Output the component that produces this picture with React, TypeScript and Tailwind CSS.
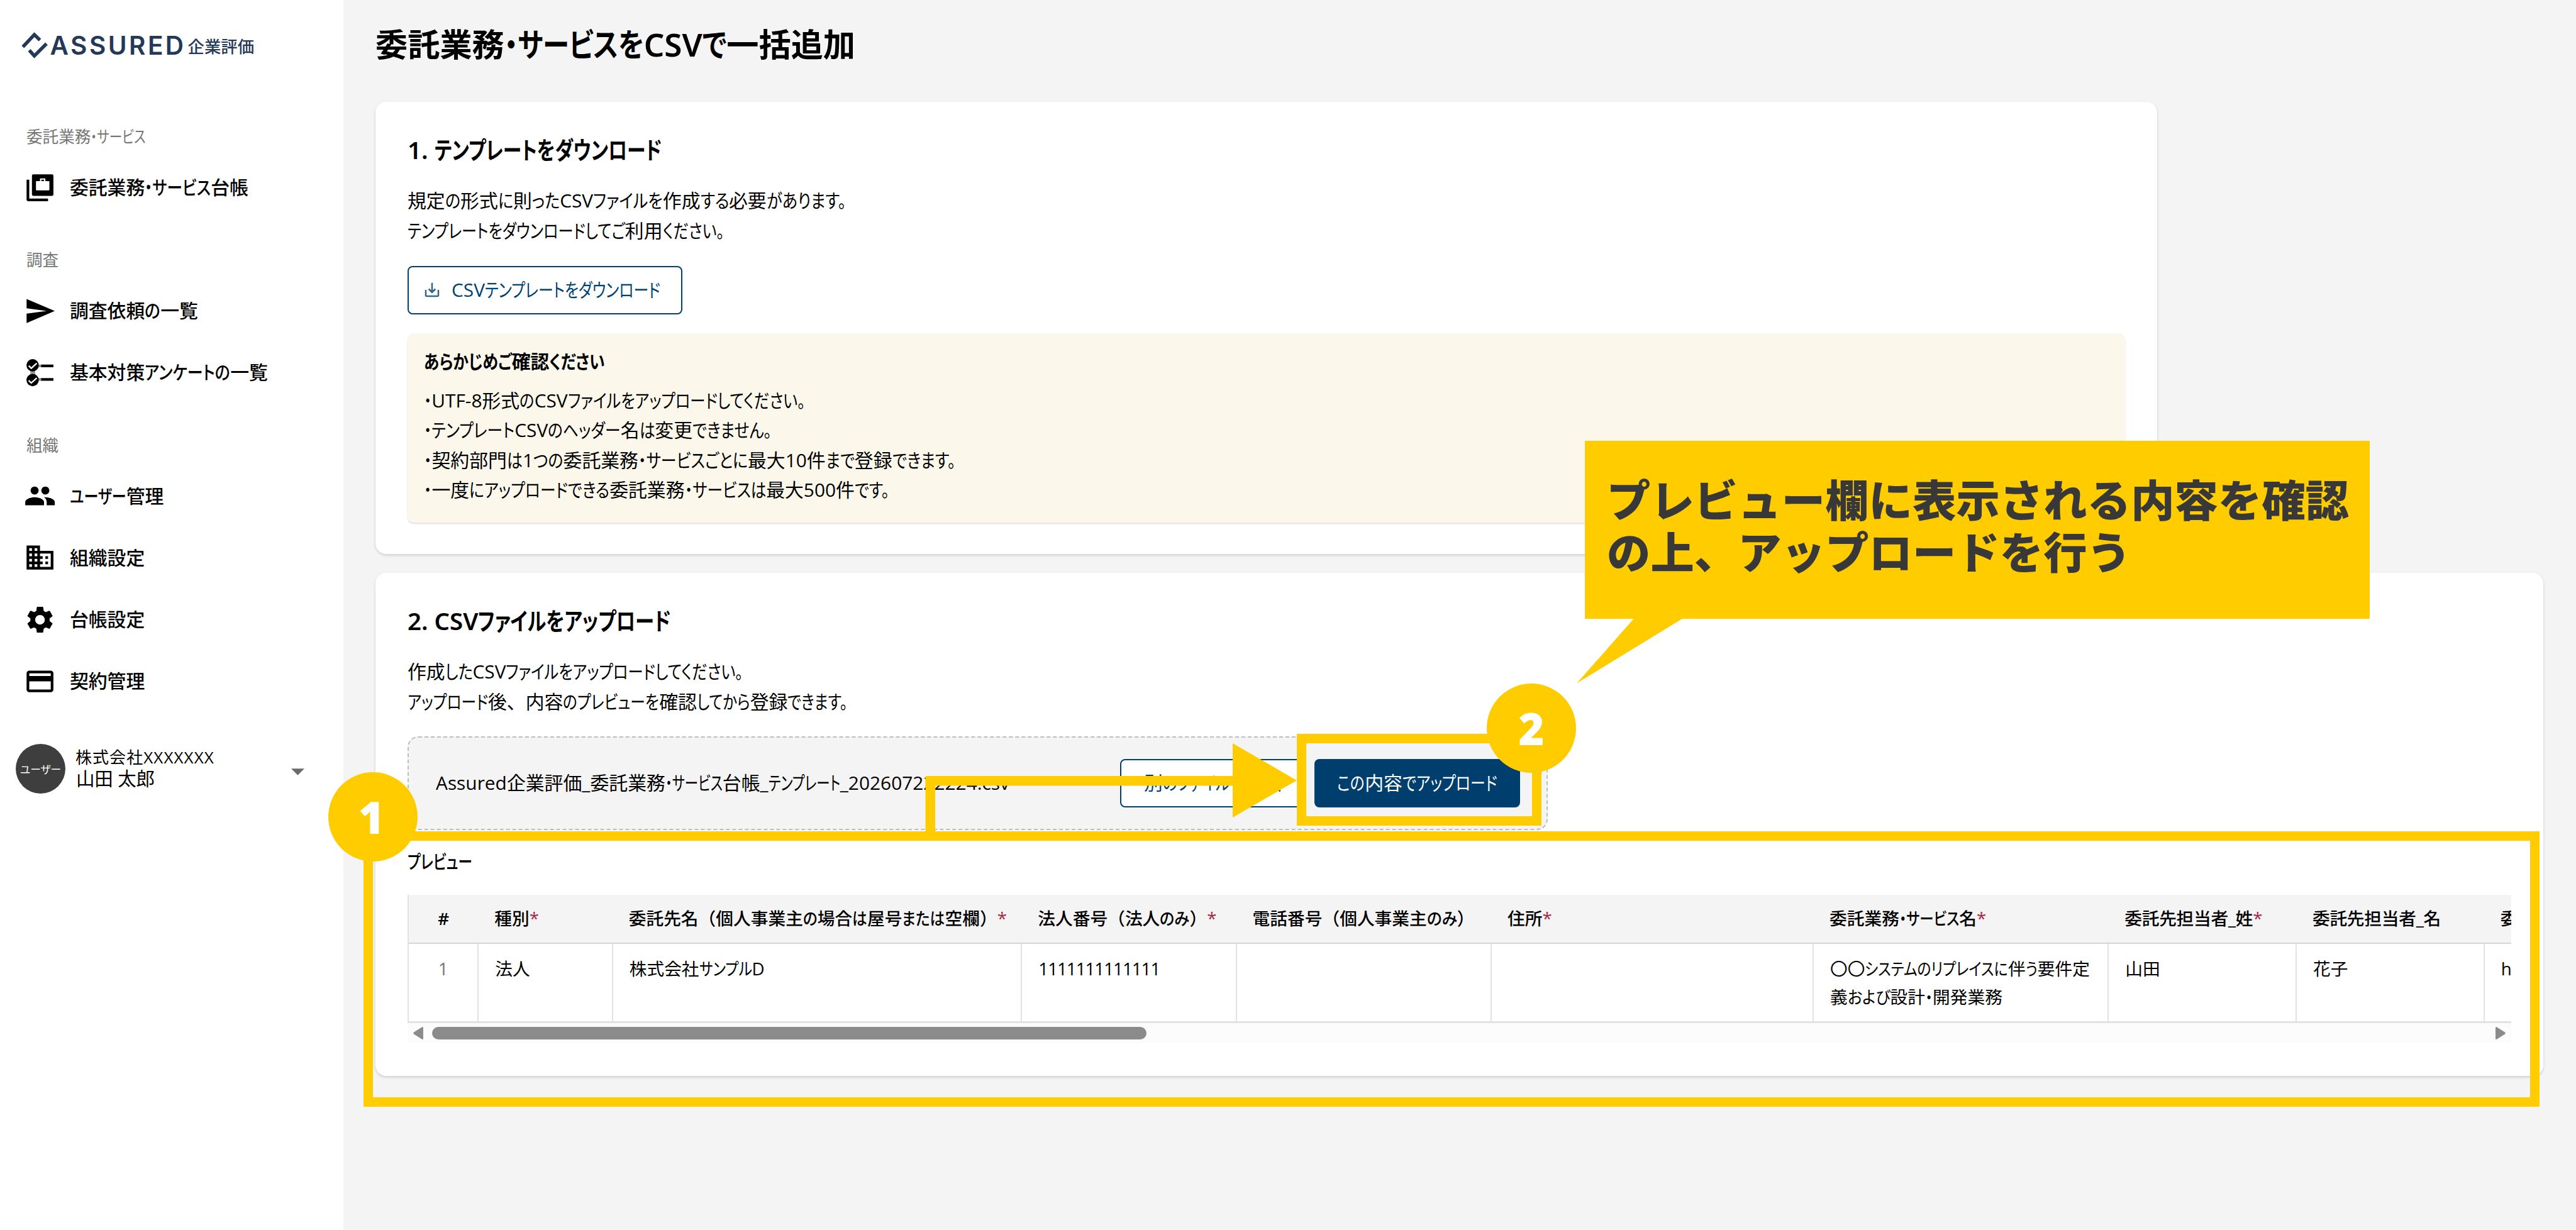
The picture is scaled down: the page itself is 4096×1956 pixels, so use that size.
import React, { useLayoutEffect, useRef } from 'react';
import { MdSend, MdPeople, MdDomain, MdSettings, MdCreditCard, MdSaveAlt } from 'react-icons/md';

interface JaProps {
  text: string;
  w?: number;
  className?: string;
}

const KANA = /([ぁ-んァ-ヶー・。]+)/;

// Proportional kana: kana runs are condensed so that the line is `w` wide, kanji keep their full width
function Ja({ text, w, className = '' }: JaProps) {
  const ref = useRef<HTMLSpanElement>(null);

  useLayoutEffect(() => {
    const el = ref.current;
    if (!el || !w) return;
    el.style.letterSpacing = '';
    const runs = Array.from(el.querySelectorAll('span'));
    runs.forEach((r) => {
      r.style.transform = '';
      r.style.marginRight = '';
    });
    const total = el.getBoundingClientRect().width;
    if (runs.length === 0) {
      el.style.letterSpacing = `${(w - total) / text.length}px`;
      return;
    }
    const widths = runs.map((r) => r.getBoundingClientRect().width);
    const kana = widths.reduce((a, b) => a + b, 0);
    const scale = (w - total + kana) / kana;
    runs.forEach((r, i) => {
      r.style.transform = `scaleX(${scale})`;
      r.style.marginRight = `${(scale - 1) * widths[i]}px`;
    });
  }, [text, w]);

  return (
    <span ref={ref} className={`inline-block whitespace-pre ${className}`}>
      {text.split(KANA).map((part, i) =>
        i % 2 ? (
          <span key={i} className="inline-block origin-left [font-feature-settings:'palt']">{part}</span>
        ) : (
          part
        )
      )}
    </span>
  );
}

function LedgerIcon({ className }: { className?: string }) {
  return (
    <svg viewBox="0 0 24 24" className={className} fill="currentColor">
      <path d="M2 6h2v14h14v2H3a1 1 0 0 1-1-1z" />
      <path
        fillRule="evenodd"
        d="M7 2h14a1 1 0 0 1 1 1v14a1 1 0 0 1-1 1H7a1 1 0 0 1-1-1V3a1 1 0 0 1 1-1zM12 5v2H9.5a.5.5 0 0 0-.5.5v6a.5.5 0 0 0 .5.5h9a.5.5 0 0 0 .5-.5v-6a.5.5 0 0 0-.5-.5H16V5zM13 6h2v1h-2z"
      />
    </svg>
  );
}

function ChecklistIcon({ className }: { className?: string }) {
  return (
    <svg viewBox="0 0 24 24" className={className}>
      <path d="M4.8 10.5h3.6v3H4.8zM10.8 6h2v2h-2zM10.8 16h2v2h-2z" fill="#999" />
      <circle cx="6.5" cy="6.5" r="4.6" />
      <circle cx="6.5" cy="17.5" r="4.6" />
      <path d="M12.8 6H22v2h-9.2zM12.8 16H22v2h-9.2z" />
      <path d="M3.6 6.9l1.9 1.8L9.600 5M3.6 17.9l1.9 1.8L9.600 16" fill="none" stroke="#fff" strokeWidth="1.1" />
    </svg>
  );
}

const groups = [
  {
    label: '委託業務・サービス',
    w: 190,
    items: [{ icon: LedgerIcon, text: '委託業務・サービス台帳', w: 284 }],
  },
  {
    label: '調査',
    items: [
      { icon: MdSend, text: '調査依頼の一覧', w: 204 },
      { icon: ChecklistIcon, text: '基本対策アンケートの一覧', w: 315 },
    ],
  },
  {
    label: '組織',
    items: [
      { icon: MdPeople, text: 'ユーザー管理', w: 149.5 },
      { icon: MdDomain, text: '組織設定' },
      { icon: MdSettings, text: '台帳設定' },
      { icon: MdCreditCard, text: '契約管理' },
    ],
  },
];

function Sidebar() {
  return (
    <aside className="w-[546px] shrink-0 bg-white">
      <div className="flex h-[151.5px] items-start pl-[34px] pt-[51px] text-[#243858]">
        <svg viewBox="54 66 176 180" className="h-[42.6px] w-[41.6px]" fill="none" stroke="currentColor" strokeWidth="23">
          <path d="M64 166L141 83l38 37M107 188l34 38 82-82" />
        </svg>
        <Ja text="ASSURED" w={216} className="ml-[4px] font-[Inter] text-[40.5px] font-semibold leading-[43px]" />
        <Ja text="企業評価" className="ml-[3px] mt-[2px] text-[26.4px] font-medium leading-[43px]" />
      </div>

      {groups.map((g) => (
        <div key={g.label} className="pt-[36px]">
          <div className="flex h-[62px] items-center pl-[42px] text-[25.6px] text-[#767676]">
            <Ja text={g.label} w={g.w} />
          </div>
          {g.items.map(({ icon: Icon, text, w }) => (
            <div key={text} className="flex h-[98.13px] items-center pl-[38.4px]">
              <Icon className="size-[51.2px]" />
              <Ja text={text} w={w} className="ml-[21.3px] text-[29.87px] font-medium" />
            </div>
          ))}
        </div>
      ))}

      <div className="mt-[51px] flex h-[79px] items-center pl-[25.4px] pr-[62px]">
        <div className="flex size-[79px] items-center justify-center rounded-full bg-[#3e3e3e] text-[17.5px] text-white">
          <Ja text="ユーザー" w={65} />
        </div>
        <div className="mb-[4px] ml-[15.5px] flex flex-col items-start leading-[34px]">
          <Ja text="株式会社XXXXXXX" w={221} className="text-[26px]" />
          <Ja text="山田 太郎" w={126} className="pl-px text-[29.5px]" />
        </div>
        <svg viewBox="0 0 20 10" className="ml-auto mt-[10px] h-[11px] w-[21px]" fill="#6b6b6b">
          <path d="M0 0h20L10 10z" />
        </svg>
      </div>
    </aside>
  );
}

const notices = [
  { text: '・UTF-8形式のCSVファイルをアップロードしてください。', w: 606 },
  { text: '・テンプレートCSVのヘッダー名は変更できません。', w: 553 },
  { text: '・契約部門は1つの委託業務・サービスごとに最大10件まで登録できます。', w: 845 },
  { text: '・一度にアップロードできる委託業務・サービスは最大500件です。', w: 740 },
];

function TemplateCard() {
  return (
    <section className="h-[719px] w-[2833px] rounded-[17px] bg-white px-[51px] pt-[48px] shadow-[0_2px_4px_rgba(0,0,0,0.16)]">
      <h2 className="flex h-[58px] items-center text-[38.4px] font-medium font-['Noto_Sans','Noto_Sans_CJK_JP',sans-serif]">
        <Ja text="1. テンプレートをダウンロード" w={404} className="font-semibold" />
      </h2>
      <div className="mt-[26.5px] flex flex-col text-[29.87px] leading-[48px]">
        <div><Ja text="規定の形式に則ったCSVファイルを作成する必要があります。" w={697} /></div>
        <div><Ja text="テンプレートをダウンロードしてご利用ください。" w={503} /></div>
      </div>
      <button className="mt-[32px] flex h-[77px] w-[437px] items-center rounded-[8px] border-2 border-[#00416f] pl-[22px] text-[29.87px] text-[#00416f]">
        <MdSaveAlt className="size-[30px] opacity-80" />
        <Ja text="CSVテンプレートをダウンロード" w={332} className="ml-[16px]" />
      </button>
      <div className="mt-[30px] h-[301px] rounded-[10px] bg-[#fbf8eb] pl-[26px] pt-[21px] text-[29.87px] shadow-[0_2px_3px_rgba(0,0,0,0.12)]">
        <div className="h-[48px] font-bold leading-[48px]">
          <Ja text="あらかじめご確認ください" w={288} />
        </div>
        <div className="mt-[14px] leading-[47.5px]">
          {notices.map((n) => (
            <div key={n.text}><Ja text={n.text} w={n.w} /></div>
          ))}
        </div>
      </div>
    </section>
  );
}

const columns = [
  { head: '種別', w: undefined, required: true, cell: ['法人'] },
  { head: '委託先名（個人事業主の場合は屋号または空欄）', w: 586, required: true, cell: ['株式会社サンプルD'], cw: 215 },
  { head: '法人番号（法人のみ）', w: 269, required: true, cell: ['1111111111111'], cw: 193 },
  { head: '電話番号（個人事業主のみ）', w: 353, cell: [] },
  { head: '住所', w: undefined, required: true, cell: [] },
  { head: '委託業務・サービス名', w: 234, required: true, cell: ['〇〇システムのリプレイスに伴う要件定', '義および設計・開発業務'], cw: 413, cw2: 274 },
  { head: '委託先担当者_姓', w: 204, required: true, cell: ['山田'] },
  { head: '委託先担当者_名', w: 204, cell: ['花子'] },
  { head: '委託先担当者_メールアドレス', w: undefined, cell: ['hanako@example.com'] },
];

function PreviewTable() {
  return (
    <div className="w-[3345px] overflow-hidden">
      <div className="grid w-[3600px] grid-cols-[111.3px_213.4px_650.6px_341.3px_405.4px_512px_469.3px_298.7px_298.7px_298.7px] border-l-2 border-[#e2e2e2] text-[27.73px]">
        <div className="flex h-[78px] items-center justify-center border-b-2 border-[#d6d6d6] bg-[#f4f4f4] pr-px font-semibold">#</div>
        {columns.map((c) => (
          <div key={c.head} className="flex h-[78px] items-center whitespace-nowrap border-b-2 border-[#d6d6d6] bg-[#f4f4f4] pl-[25px] font-medium">
            <Ja text={c.head} w={c.w} />
            {c.required && <span className="font-normal text-[#a8284a]">*</span>}
          </div>
        ))}
        <div className="h-[126px] border-b-[3px] border-r-2 border-[#e2e2e2] pt-[17px] text-center leading-[44.5px] text-[#767676]">1</div>
        {columns.map((c) => (
          <div key={c.head} className="h-[126px] border-b-[3px] border-r-2 border-[#e2e2e2] pl-[26px] pt-[17px] leading-[44.5px]">
            {c.cell.map((line, i) => (
              <div key={line}><Ja text={line} w={i ? c.cw2 : c.cw} /></div>
            ))}
          </div>
        ))}
      </div>
      <div className="flex h-[32px] items-center bg-[#fcfcfc] pl-[9px] pr-[9px]">
        <svg viewBox="0 0 16 20" className="h-[20px] w-[16px]" fill="#8b8b8b">
          <path d="M16 1.5v17q0 1.5-1.5 1.5L1 11.5q-1.5-1.5 0-3L14.5 0Q16 0 16 1.5z" />
        </svg>
        <div className="ml-[14px] h-[20px] w-[1136px] rounded-full bg-[#8b8b8b]" />
        <svg viewBox="0 0 16 20" className="ml-auto h-[20px] w-[16px]" fill="#8b8b8b">
          <path d="M0 1.5v17Q0 20 1.5 20L15 11.5q1.5-1.5 0-3L1.5 0Q0 0 0 1.5z" />
        </svg>
      </div>
    </div>
  );
}

function UploadCard() {
  return (
    <section className="mt-[30px] h-[800px] w-[3447px] rounded-[17px] bg-white px-[51px] pt-[48px] shadow-[0_2px_4px_rgba(0,0,0,0.16)]">
      <h2 className="flex h-[58px] items-center text-[38.4px] font-medium font-['Noto_Sans','Noto_Sans_CJK_JP',sans-serif]">
        <Ja text="2. CSVファイルをアップロード" w={419} className="font-semibold" />
      </h2>
      <div className="mt-[27px] text-[29.87px] leading-[48px]">
        <div><Ja text="作成したCSVファイルをアップロードしてください。" w={534} /></div>
        <div><Ja text="アップロード後、内容のプレビューを確認してから登録できます。" w={700} /></div>
      </div>
      <div className="mt-[31px] flex h-[149px] w-[1813px] items-center rounded-[17px] border-2 border-dashed border-[#bdbdbd] bg-[#f4f4f4] pl-[43px] pr-[42px] text-[29.87px]">
        <Ja text="Assured企業評価_委託業務・サービス台帳_テンプレート_202607222224.csv" w={912} />
        <button className="ml-auto flex h-[77px] w-[292px] items-center rounded-[8px] border-2 border-[#00416f] bg-white pl-[36px] text-[#00416f]">
          <Ja text="別のファイルを選択" w={218} />
        </button>
        <button className="ml-[17px] flex h-[77px] w-[327px] items-center justify-center rounded-[8px] bg-[#003f6d] text-white">
          <Ja text="この内容でアップロード" w={254} />
        </button>
      </div>
      <div className="mt-[26px] h-[48px] text-[29.87px] font-medium leading-[48px]">
        <Ja text="プレビュー" w={103} />
      </div>
      <div className="mt-[29px]">
        <PreviewTable />
      </div>
    </section>
  );
}

// Step markers and callout drawn over the page
function Annotations() {
  return (
    <>
      <div className="absolute left-[577.5px] top-[1322px] h-[438px] w-[3460.5px] border-[15.6px] border-[#fc0]" />
      <div className="absolute left-[2061.5px] top-[1167px] h-[146px] w-[389px] border-[15.6px] border-[#fc0]" />
      <svg viewBox="0 0 592 144" className="absolute left-[1471px] top-[1182px] h-[144px] w-[592px]" fill="#fc0">
        <path d="M.5 52H489V0L591 59 489 118V67.6H16V144H.5z" />
      </svg>
      <div className="absolute left-[522px] top-[1228px] flex size-[142px] items-center justify-center rounded-full bg-[#fc0] pr-[5px] text-[70px] font-black leading-none text-white font-['Noto_Sans',sans-serif]">
        1
      </div>
      <div className="absolute left-[2364px] top-[1086.5px] flex size-[142px] items-center justify-center rounded-full bg-[#fc0] text-[70px] font-black leading-none text-white font-['Noto_Sans',sans-serif]">
        2
      </div>
      <svg viewBox="0 0 170 104" className="absolute left-[2506.5px] top-[983px] h-[104px] w-[170px]" fill="#fc0">
        <path d="M91.5 0h78L.3 103.5z" />
      </svg>
      <div className="absolute left-[2520px] top-[700.5px] h-[283px] w-[1248px] whitespace-nowrap bg-[#fc0] pl-[35px] pt-[50px] text-[69.33px] font-extrabold leading-[83.2px] tracking-[0.1px] text-[#383838] font-['Noto_Sans_CJK_JP',sans-serif]">
        プレビュー欄に表示される内容を確認
        <br />
        の上、アップロードを行う
      </div>
    </>
  );
}

export default function App() {
  return (
    <div lang="ja" className="relative flex h-[1956px] w-[4096px] overflow-hidden bg-[#f4f4f4] text-black font-['Open_Sans','Noto_Sans_CJK_JP',sans-serif]">
      <Sidebar />
      <main className="flex-1 pl-[51px]">
        <h1 className="flex h-[141px] items-center text-[51.2px] font-semibold font-['Noto_Sans','Noto_Sans_CJK_JP',sans-serif]">
          <Ja text="委託業務・サービスをCSVで一括追加" w={763} />
        </h1>
        <div className="mt-[21px]">
          <TemplateCard />
          <UploadCard />
        </div>
      </main>
      <Annotations />
    </div>
  );
}
